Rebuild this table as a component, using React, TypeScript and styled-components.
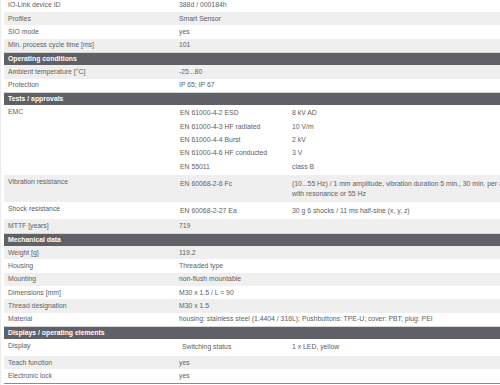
import * as React from "react"
import styled, { createGlobalStyle } from "styled-components"

const GlobalStyle = createGlobalStyle`
  html, body {
    margin: 0;
    padding: 0;
    background: #fff;
  }
  body {
    font-family: "Liberation Sans", Arial, sans-serif;
    overflow: hidden;
  }
`

const Page = styled.div`
  width: 500px;
  height: 385px;
  overflow: hidden;
  box-sizing: border-box;
  border-left: 1px solid #ececec;
  padding-left: 3px;
`

const Table = styled.div`
  width: 515px;
  margin-top: -1.33px;
  border-bottom: 1px solid #8c8c8c;
  font-size: 6.85px;
  color: #606060;
`

const Row = styled.div<{ $shade?: boolean }>`
  display: grid;
  grid-template-columns: 175px 1fr;
  background: ${({ $shade }) => ($shade ? "#efefef" : "#fff")};
`

const Label = styled.div`
  padding: 1.67px 4px;
  line-height: 10px;
`

const Value = styled.div`
  padding: 1.67px 0;
  line-height: 10px;
`

const Nested = styled.div`
  padding: 1.67px 0 2px;
`

const SubRow = styled.div`
  display: grid;
  grid-template-columns: 112px 1fr;
  padding: 1.67px 0 1.67px 1px;
  line-height: 10px;
`

const SubKey = styled.span`
  white-space: pre;
`

const Header = styled.div`
  border-top: 1px solid #d4d4d4;
  background: #606166;
  color: #fff;
  font-weight: bold;
  line-height: 10px;
  padding: 1.17px 4px 1.16px;
`

type Item =
  | { kind: "head"; title: string }
  | { kind: "row"; label: string; value: string; shade?: boolean }
  | { kind: "nested"; label: string; rows: [string, string][]; shade?: boolean }

const items: Item[] = [
  { kind: "row", label: "IO-Link device ID", value: "388d / 000184h" },
  { kind: "row", label: "Profiles", value: "Smart Sensor", shade: true },
  { kind: "row", label: "SIO mode", value: "yes" },
  { kind: "row", label: "Min. process cycle time [ms]", value: "101", shade: true },
  { kind: "head", title: "Operating conditions" },
  { kind: "row", label: "Ambient temperature [°C]", value: "-25...80", shade: true },
  { kind: "row", label: "Protection", value: "IP 65; IP 67" },
  { kind: "head", title: "Tests / approvals" },
  {
    kind: "nested",
    label: "EMC",
    rows: [
      ["EN 61000-4-2 ESD", "8 kV AD"],
      ["EN 61000-4-3 HF radiated", "10 V/m"],
      ["EN 61000-4-4 Burst", "2 kV"],
      ["EN 61000-4-6 HF conducted", "3 V"],
      ["EN 55011", "class B"],
    ],
  },
  {
    kind: "nested",
    label: "Vibration resistance",
    shade: true,
    rows: [
      [
        "EN 60068-2-6 Fc",
        "(10...55 Hz) / 1 mm amplitude, vibration duration 5 min., 30 min. per axis with resonance or 55 Hz",
      ],
    ],
  },
  {
    kind: "nested",
    label: "Shock resistance",
    rows: [["EN 60068-2-27 Ea", "30 g 6 shocks / 11 ms half-sine (x, y, z)"]],
  },
  { kind: "row", label: "MTTF [years]", value: "719", shade: true },
  { kind: "head", title: "Mechanical data" },
  { kind: "row", label: "Weight [g]", value: "119.2", shade: true },
  { kind: "row", label: "Housing", value: "Threaded type" },
  { kind: "row", label: "Mounting", value: "non-flush mountable", shade: true },
  { kind: "row", label: "Dimensions [mm]", value: "M30 x 1.5 / L = 90" },
  { kind: "row", label: "Thread designation", value: "M30 x 1.5", shade: true },
  {
    kind: "row",
    label: "Material",
    value: "housing: stainless steel (1.4404 / 316L); Pushbuttons: TPE-U; cover: PBT; plug: PEI",
  },
  { kind: "head", title: "Displays / operating elements" },
  { kind: "nested", label: "Display", rows: [[" Switching status", "1 x LED, yellow"]] },
  { kind: "row", label: "Teach function", value: "yes", shade: true },
  { kind: "row", label: "Electronic lock", value: "yes" },
]

export default function App() {
  return (
    <Page>
      <GlobalStyle />
      <Table>
        {items.map((item, i) => {
          if (item.kind === "head") return <Header key={i}>{item.title}</Header>
          if (item.kind === "row")
            return (
              <Row key={i} $shade={item.shade}>
                <Label>{item.label}</Label>
                <Value>{item.value}</Value>
              </Row>
            )
          return (
            <Row key={i} $shade={item.shade}>
              <Label>{item.label}</Label>
              <Nested>
                {item.rows.map(([k, v]) => (
                  <SubRow key={k}>
                    <SubKey>{k}</SubKey>
                    <span>{v}</span>
                  </SubRow>
                ))}
              </Nested>
            </Row>
          )
        })}
      </Table>
    </Page>
  )
}
